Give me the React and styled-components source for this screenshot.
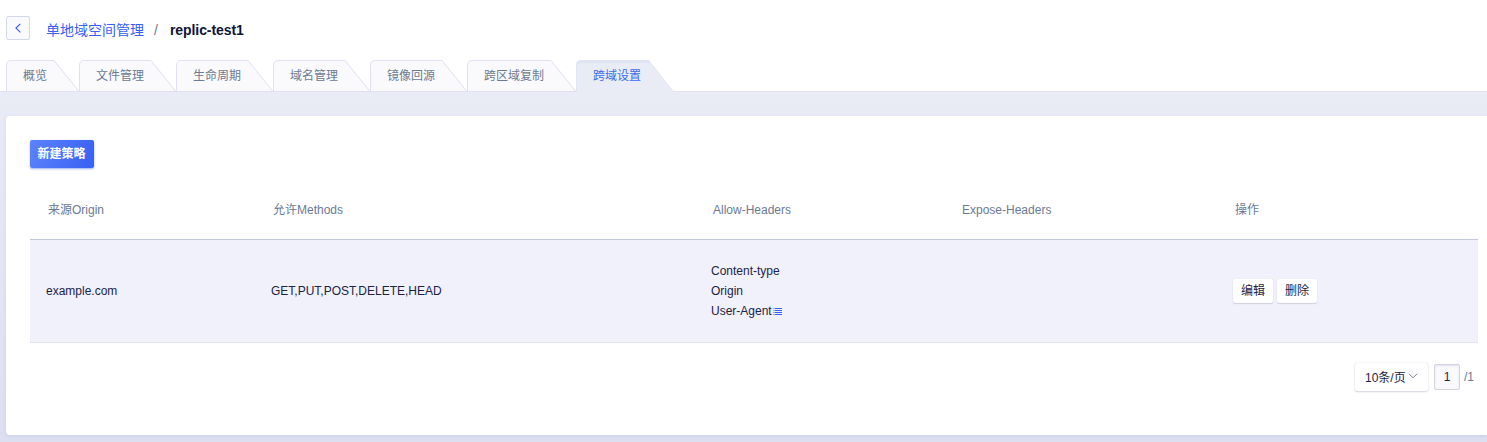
import React from "react";
import styled, { createGlobalStyle } from "styled-components";

const Global = createGlobalStyle`
  * { box-sizing: border-box; }
  html { overflow: hidden; }
  body {
    margin: 0;
    overflow: hidden;
    background: #fff;
    color: #1c2444;
    font: 12px/20px "Liberation Sans", "Noto Sans CJK SC", sans-serif;
  }
`;

const Page = styled.div`
  display: flex;
  flex-direction: column;
  height: 442px;
  overflow: hidden;
`;

const Header = styled.header`
  display: flex;
  align-items: flex-start;
  height: 60px;
  padding: 16px 0 0 6px;
`;

const BackButton = styled.button`
  display: flex;
  align-items: center;
  justify-content: center;
  width: 24px;
  height: 24px;
  padding: 0;
  border: 1px solid #d3d7ec;
  border-radius: 2px;
  background: #fafafd;
`;

const Breadcrumb = styled.nav`
  display: flex;
  margin: 4px 0 0 16px;
  font-size: 14px;
  line-height: 20px;
  white-space: nowrap;
`;

const CrumbLink = styled.a`
  width: 98px;
  color: #3860f4;
`;

const Slash = styled.span`
  width: 26px;
  padding-left: 10px;
  color: #6b7798;
`;

const Current = styled.strong`
  color: #0d1537;
  font-weight: 700;
  letter-spacing: -0.08px;
`;

const Tabs = styled.div`
  display: flex;
  height: 32px;
  padding-left: 6px;
  border-bottom: 1px solid #dfe0f0;
`;

const TabItem = styled.div`
  position: relative;
  flex: none;
  width: ${(p) => p.$width}px;
  height: 32px;
  padding: 6px 0 0 17px;
  color: ${(p) => (p.$active ? "#3b6df0" : "#6b7a93")};
  white-space: nowrap;
`;

const TabShape = styled.svg`
  position: absolute;
  left: 0;
  top: 0;
  overflow: visible;
`;

const TabLabel = styled.span`
  position: relative;
`;

const Content = styled.main`
  flex: 1;
  padding: 24px 0 7px 6px;
  background: linear-gradient(#e9ecf5, #dcdff0);
`;

const Card = styled.section`
  height: 319px;
  padding: 24px 9px 0 24px;
  border-radius: 4px 0 0 4px;
  background: #fff;
  box-shadow: 0 1px 4px rgba(90, 100, 170, 0.12);
`;

const PrimaryButton = styled.button`
  display: block;
  width: 64px;
  height: 28px;
  padding: 0 1px 0 0;
  border: 0;
  border-radius: 2px;
  background: linear-gradient(110deg, #5c83fb, #3860f4);
  box-shadow: 0 1px 2px rgba(56, 96, 244, 0.5);
  color: #fff;
  font: inherit;
  font-weight: 700;
  line-height: 28px;
`;

const Row = styled.div`
  display: grid;
  grid-template-columns: 225px 440px 249px 273px 1fr;
  align-items: center;
`;

const HeadRow = styled(Row)`
  height: 60px;
  margin-top: 12px;
  padding-left: 18px;
  border-bottom: 1px solid #c3c8d9;
  color: #6b7a93;
`;

const BodyRow = styled(Row)`
  height: 103px;
  padding-left: 16px;
  border-bottom: 1px solid #dfe1f0;
  background: #f1f1fb;
`;

const HeaderLine = styled.div`
  display: flex;
  align-items: center;
  height: 20px;
`;

const ListIcon = styled.svg`
  margin: 1px 0 0 1px;
`;

const Actions = styled.div`
  display: flex;
  gap: 4px;
`;

const SmallButton = styled.button`
  width: 40px;
  height: 24px;
  padding: 0;
  border: 0;
  border-radius: 2px;
  background: #fff;
  box-shadow: 0 1px 1px rgba(30, 40, 90, 0.16), 0 0 1px rgba(60, 70, 150, 0.18);
  color: inherit;
  font: inherit;
  line-height: 24px;
`;

const Pager = styled.div`
  display: flex;
  align-items: center;
  justify-content: flex-end;
  height: 28px;
  margin: 20px 4px 0 0;
`;

const PageSize = styled.div`
  display: flex;
  align-items: center;
  width: 73px;
  height: 28px;
  padding: 2px 0 0 10px;
  border-radius: 2px;
  background: #fff;
  box-shadow: 0 1px 2px rgba(60, 60, 120, 0.2), 0 0 1px rgba(60, 70, 150, 0.3);
  white-space: nowrap;
`;

const Chevron = styled.svg`
  margin: -4px 0 0 2px;
`;

const PageInput = styled.div`
  width: 26px;
  height: 26px;
  margin: 0 4px 0 6px;
  border: 1px solid #d2d3de;
  border-radius: 2px;
  background: #fafafd;
  box-shadow: inset 0 1px 2px rgba(60, 60, 120, 0.12);
  line-height: 24px;
  text-align: center;
`;

const Total = styled.span`
  color: #6b7a93;
`;

const tabs = [
  ["概览", 73],
  ["文件管理", 97],
  ["生命周期", 97],
  ["域名管理", 97],
  ["镜像回源", 97],
  ["跨区域复制", 109],
  ["跨域设置", 97],
];

function Tab({ label, width, active }) {
  const w = width;
  const outline = `M.5 32V5.5Q.5 .5 5.5 .5H${w - 25}L${w} 31.5`;
  return (
    <TabItem $width={width} $active={active}>
      <TabShape width={w} height="32" fill="none">
        {active ? (
          <>
            <path d={`M0 32V5Q0 0 5 0H${w - 24}L${w + 1} 32Z`} fill="#dfe5f3" />
            <path d={`M1 32V7Q1 3 5 3H${w - 22.5}L${w + 0.5} 32Z`} fill="#e9ecf5" />
          </>
        ) : (
          <>
            <path d={`M.5 31V5.5Q.5 .5 5.5 .5H${w - 25}L${w} 31Z`} fill="#fafafd" />
            <path d={outline} stroke="#dfe0f2" />
          </>
        )}
      </TabShape>
      <TabLabel>{label}</TabLabel>
    </TabItem>
  );
}

export default function App() {
  return (
    <Page>
      <Global />
      <Header>
        <BackButton aria-label="返回">
          <svg width="10" height="12" viewBox="0 0 10 12" fill="none" stroke="#3860f4" strokeWidth="1.2">
            <path d="M7.3 1.8 3 6.1 7.3 10.4" />
          </svg>
        </BackButton>
        <Breadcrumb>
          <CrumbLink>单地域空间管理</CrumbLink>
          <Slash>/</Slash>
          <Current>replic-test1</Current>
        </Breadcrumb>
      </Header>
      <Tabs>
        {tabs.map(([label, width], i) => (
          <Tab key={label} label={label} width={width} active={i === 6} />
        ))}
      </Tabs>
      <Content>
        <Card>
          <PrimaryButton>新建策略</PrimaryButton>
          <HeadRow>
            <span>来源Origin</span>
            <span>允许Methods</span>
            <span>Allow-Headers</span>
            <span>Expose-Headers</span>
            <span>操作</span>
          </HeadRow>
          <BodyRow>
            <span>example.com</span>
            <span>GET,PUT,POST,DELETE,HEAD</span>
            <div>
              <HeaderLine>Content-type</HeaderLine>
              <HeaderLine>Origin</HeaderLine>
              <HeaderLine>
                User-Agent
                <ListIcon width="9" height="8" stroke="#3860f4" shapeRendering="crispEdges">
                  <path d="M0 .5H2M0 2.5H2M0 4.5H2M0 6.5H2" strokeOpacity=".5" />
                  <path d="M2 .5H9M2 2.5H9M2 4.5H9M2 6.5H9" />
                </ListIcon>
              </HeaderLine>
            </div>
            <span />
            <Actions>
              <SmallButton>编辑</SmallButton>
              <SmallButton>删除</SmallButton>
            </Actions>
          </BodyRow>
          <Pager>
            <PageSize>
              10条/页
              <Chevron width="10" height="8" fill="none" stroke="#6b7a93">
                <path d="M1 1.8 5 5.8 9 1.8" />
              </Chevron>
            </PageSize>
            <PageInput>1</PageInput>
            <Total>/1</Total>
          </Pager>
        </Card>
      </Content>
    </Page>
  );
}
